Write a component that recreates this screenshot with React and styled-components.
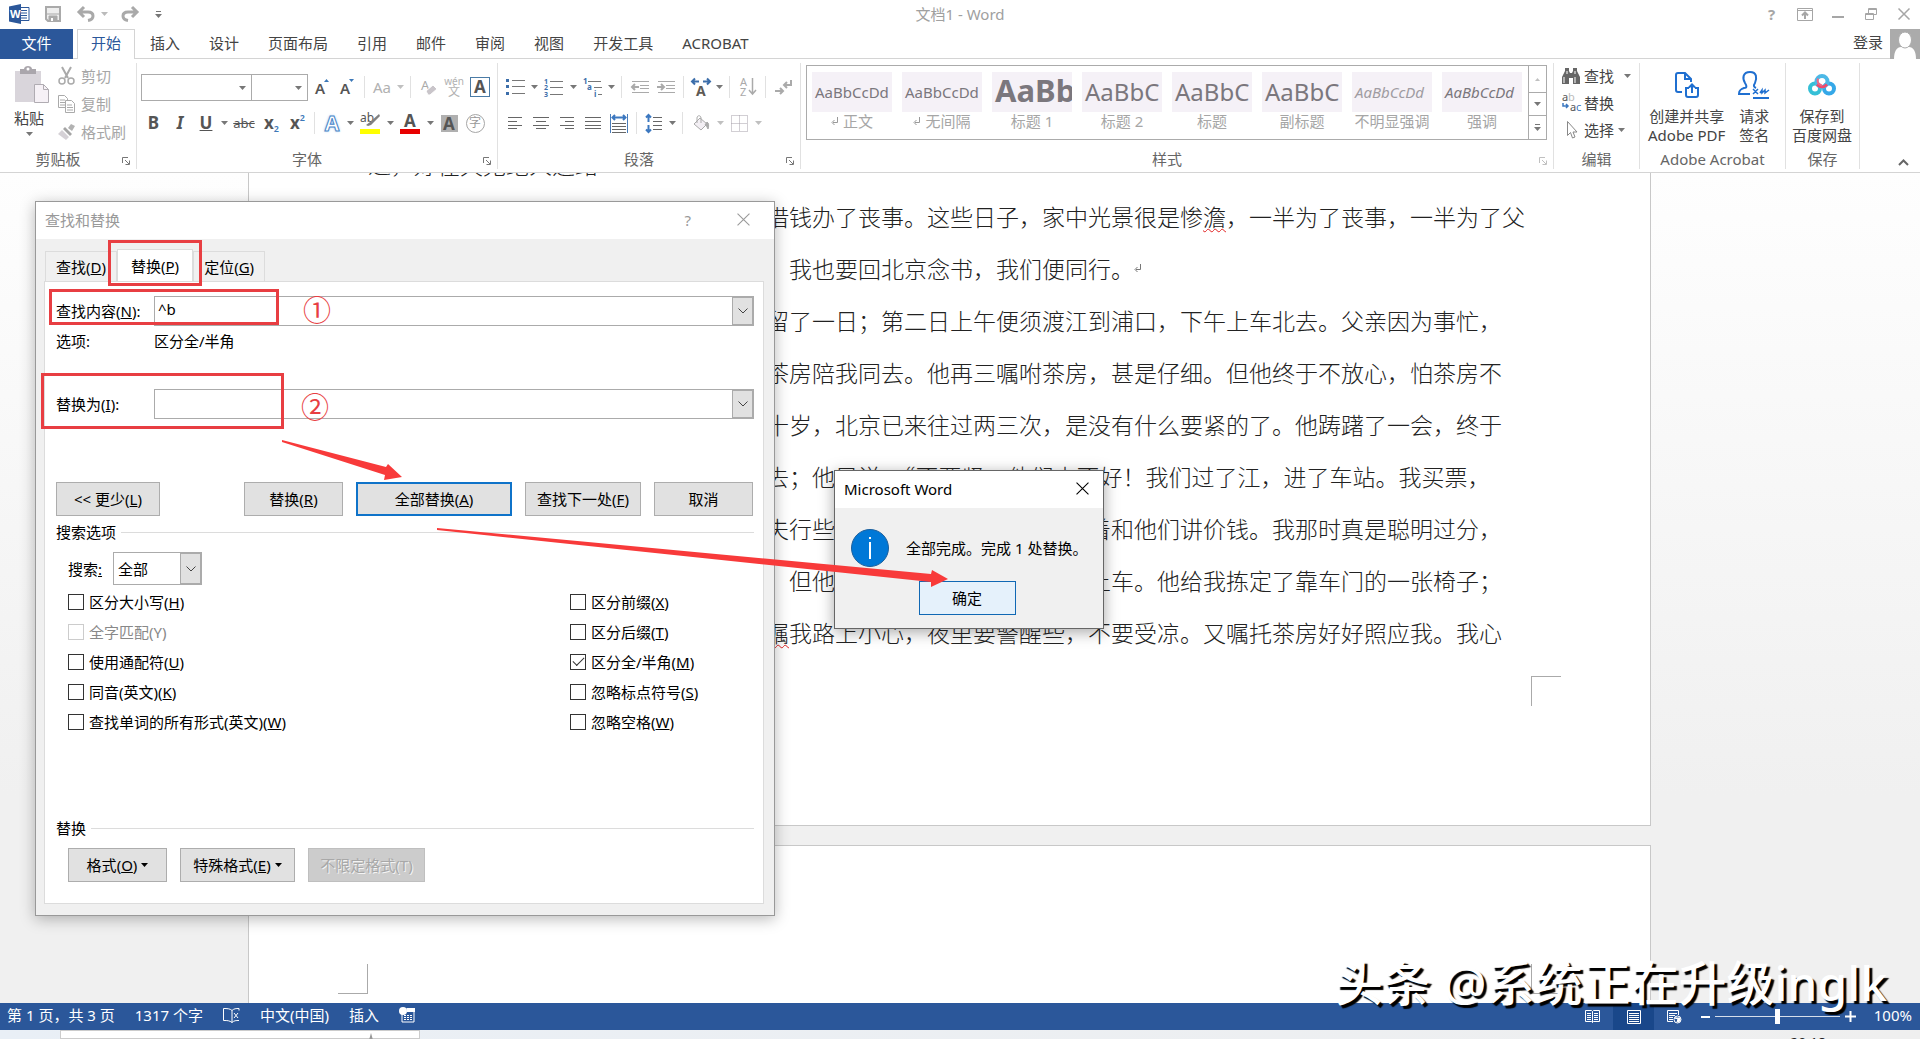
import React from 'react';
import styled, { createGlobalStyle, css } from 'styled-components';

const UI_FONT = '"Noto Sans", "Noto Sans CJK SC", sans-serif';
const CJK_FONT = '"Noto Sans CJK SC", sans-serif';

const GlobalStyle = createGlobalStyle`
    * {
        box-sizing: border-box;
    }

    body {
        margin: 0;
        overflow: hidden;
        font-family: ${UI_FONT};
        font-size: 15px;
        line-height: 20px;
        color: #444;
    }

    button, input, select {
        margin: 0;
        padding: 0;
        border: 0;
        border-radius: 0;
        background: none;
        color: inherit;
        font: inherit;
    }

    svg {
        display: block;
        flex: none;
        overflow: visible;
    }
`;

const Window = styled.div`
    position: relative;
    display: flex;
    flex-direction: column;
    height: 100vh;
    background: #fff;
    overflow: hidden;
`;

/* ---------- title bar ---------- */

const TitleBar = styled.header`
    display: grid;
    grid-template-columns: 1fr auto 1fr;
    align-items: center;
    height: 29px;
    flex: none;
    padding-bottom: 3px;
`;

const QuickAccess = styled.div`
    display: flex;
    align-items: center;
    padding-left: 9px;
`;

const WindowTitle = styled.div`
    color: #a0a0a0;
`;

const WindowButtons = styled.div`
    display: flex;
    justify-content: flex-end;
`;

const WindowButton = styled.button`
    display: flex;
    align-items: center;
    justify-content: center;
    width: 33px;
    height: 26px;
    color: #a6a6a6;
    font-weight: 700;
`;

/* ---------- tabs ---------- */

const TabBar = styled.nav`
    display: flex;
    gap: 1px;
    height: 30px;
    flex: none;
    border-bottom: 1px solid #d4d4d4;
`;

const FileTab = styled.button`
    width: 73px;
    height: 30px;
    margin-right: 3px;
    padding-bottom: 3px;
    background: #2b579a;
    color: #fff;
`;

const Tab = styled.button`
    height: 30px;
    padding: 0 13px 4px;
    border: 1px solid transparent;
    border-bottom: 0;

    ${({ $active }) => $active && css`
        background: #fff;
        border-color: #d4d4d4;
        color: #2b579a;
    `}
`;

const Account = styled.div`
    display: flex;
    align-items: flex-start;
    gap: 7px;
    margin-left: auto;

    a {
        padding-top: 3px;
        color: inherit;
        text-decoration: none;
    }
`;

/* ---------- ribbon ---------- */

const Ribbon = styled.section`
    display: flex;
    height: 114px;
    flex: none;
    padding-top: 4px;
    border-bottom: 1px solid #d4d4d4;
`;

const Group = styled.div`
    display: flex;
    flex-direction: column;
    height: 106px;
    width: ${({ $w }) => ($w ? `${$w}px` : 'auto')};
    flex: ${({ $w }) => ($w ? 'none' : '1 1 0')};
    min-width: 0;
    border-right: 1px solid #e1e1e1;
`;

const GroupBody = styled.div`
    display: flex;
    flex: 1;
    min-height: 0;
`;

const GroupFooter = styled.div`
    display: flex;
    align-items: center;
    height: 20px;
    color: #666;
`;

const GroupLabel = styled.span`
    flex: 1;
    text-align: center;
`;

const Launcher = styled.button`
    display: flex;
    justify-content: center;
    width: 20px;
    padding: 4px 0 0;
    color: ${({ disabled }) => (disabled ? '#c0c0c0' : '#777')};
`;

const Stack = styled.div`
    display: flex;
    flex-direction: column;
    gap: 8px;
    padding: 10px 0 0 4px;
`;

const Row = styled.div`
    display: flex;
    align-items: center;
    height: 28px;
`;

const Tool = styled.button`
    display: flex;
    align-items: center;
    justify-content: center;
    width: ${({ $w }) => $w || 26}px;
    height: 28px;
    color: ${({ $off }) => ($off ? '#b1b1b1' : '#555')};
    font-weight: ${({ $bold }) => ($bold ? 700 : 400)};
    font-size: ${({ $size }) => $size || 15}px;
`;

const Separator = styled.span`
    width: 1px;
    height: 22px;
    margin: 0 5px 0 4px;
    background: #e1e1e1;
`;

const ComboBox = styled.label`
    position: relative;
    display: flex;
    width: ${({ $w }) => $w}px;
    height: 27px;
    margin-right: ${({ $joined }) => ($joined ? '-1px' : '2px')};
    border: 1px solid #ababab;

    select {
        width: 100%;
        appearance: none;
    }

    svg {
        position: absolute;
        top: 11px;
        right: 5px;
        pointer-events: none;
    }
`;

const PasteButton = styled.button`
    display: flex;
    flex-direction: column;
    align-items: center;
    gap: 4px;
    width: 58px;
    padding-top: 3px;
`;

const SideList = styled.div`
    display: flex;
    flex-direction: column;
    gap: 8px;
    padding: ${({ $tight }) => ($tight ? '3px 0 0 8px' : '3px 0 0')};
`;

const SideButton = styled.button`
    display: flex;
    align-items: center;
    gap: ${({ $tight }) => ($tight ? 4 : 6)}px;
    height: ${({ $tight }) => ($tight ? 19 : 20)}px;
    color: ${({ disabled }) => (disabled ? '#a6a6a6' : '#444')};
`;

const UnderA = styled.span`
    display: flex;
    flex-direction: column;
    align-items: center;
    width: 20px;
    font-size: 17px;
    font-weight: 700;
    line-height: 16px;
    border-bottom: 5px solid ${({ $bar }) => $bar};
`;

const OutlineA = styled.span`
    color: #fff;
    font-size: 21px;
    font-weight: 700;
    -webkit-text-stroke: 1px #4a86c8;
    text-shadow: 0 0 3px #8ab8ea;
`;

const BoxedA = styled.span`
    width: ${({ $filled }) => ($filled ? 17 : 20)}px;
    height: ${({ $filled }) => ($filled ? 17 : 20)}px;
    background: ${({ $filled }) => ($filled ? '#b0b0b0' : '#fff')};
    border: ${({ $filled }) => ($filled ? '0' : '1px solid #4a7ba6')};
    font-size: 17px;
    font-weight: 700;
    line-height: 17px;
`;

const CircledChar = styled.span`
    width: 19px;
    height: 19px;
    border: 1px solid #a6a6a6;
    border-radius: 50%;
    color: #999;
    font-size: 12px;
    line-height: 16px;
`;

const Phonetic = styled.span`
    display: flex;
    flex-direction: column;
    align-items: center;
    font-size: 10px;
    line-height: 9px;

    b {
        font-size: 12px;
        font-weight: 400;
        line-height: 12px;
    }
`;

const Script = styled.span`
    display: flex;
    align-items: ${({ $sup }) => ($sup ? 'flex-start' : 'flex-end')};
    height: 20px;
    font-size: 17px;
    font-weight: 700;

    small {
        color: #3c78b8;
        font-size: 9px;
        font-weight: 600;
        line-height: ${({ $sup }) => ($sup ? 10 : 8)}px;
    }
`;

/* ---------- style gallery ---------- */

const Gallery = styled.div`
    display: flex;
    flex: 1;
    height: 75px;
    min-width: 0;
    margin: 2px 6px 0 5px;
    border: 1px solid #ababab;
`;

const GalleryItems = styled.div`
    display: flex;
    flex: 1;
    gap: 10px;
    min-width: 0;
    padding: 6px 0 0 5px;
    overflow: hidden;
`;

const StyleItem = styled.button`
    display: flex;
    flex-direction: column;
    align-items: center;
    width: 80px;
    flex: none;
    color: #a6a6a6;
    white-space: nowrap;
`;

const Sample = styled.span`
    width: 80px;
    height: 40px;
    padding-left: 3px;
    background: #f5f1f7;
    color: ${({ $light }) => ($light ? '#a09ca2' : '#7b777d')};
    font-size: ${({ $size }) => $size || 15}px;
    font-weight: ${({ $bold }) => ($bold ? 700 : 400)};
    font-style: ${({ $italic }) => ($italic ? 'italic' : 'normal')};
    line-height: ${({ $bold }) => ($bold ? 36 : 40)}px;
    text-align: left;
    overflow: hidden;
`;

const StyleName = styled.span`
    display: flex;
    align-items: center;
    gap: 4px;
    line-height: 18px;
`;

const GalleryScroll = styled.div`
    display: grid;
    grid-template-rows: 26px 23px 24px;
    width: 18px;
    border-left: 1px solid #ababab;
`;

const ScrollStep = styled.button`
    display: flex;
    align-items: center;
    justify-content: center;

    & + & {
        border-top: 1px solid #ababab;
    }
`;

const BigButtons = styled.div`
    display: flex;
    gap: 13px;
    padding-left: ${({ $indent }) => $indent}px;
`;

const BigButton = styled.button`
    display: flex;
    flex-direction: column;
    align-items: center;
    height: 84px;
    padding-top: 8px;
    line-height: 19px;

    svg {
        height: 28px;
        margin-bottom: 8px;
    }
`;

const CollapseCell = styled.div`
    display: flex;
    flex: none;
    align-items: flex-end;
    justify-content: flex-end;
    width: 60px;
    padding: 0 11px 6px 0;
`;

/* ---------- document ---------- */

const Workspace = styled.main`
    flex: 1;
    min-height: 0;
    padding: 0 269px 0 248px;
    background: linear-gradient(#fefefe, #f0f0f0 75%);
    overflow: hidden;
`;

const Page = styled.article`
    display: flex;
    flex-direction: column;
    margin-bottom: 19px;
    background: #fff;
    border: 1px solid #c8c8c8;
    border-top: ${({ $cont }) => ($cont ? '0' : '1px solid #c8c8c8')};
    overflow: hidden;
`;

const PageText = styled.div`
    margin-top: -35px;
    color: #222;
    font-family: ${CJK_FONT};
    font-size: 23px;
    font-weight: 300;
    line-height: 52px;
    white-space: pre;
`;

const Line = styled.div`
    display: flex;
    align-items: center;
    height: 52px;
    padding-left: ${({ $start }) => ($start ? 119 : 517)}px;
`;

const Misspelt = styled.span`
    text-decoration: underline wavy #e02020 1px;
    text-decoration-skip-ink: none;
    text-underline-offset: 2px;
`;

const Corners = styled.div`
    display: flex;
    justify-content: space-between;
    padding: ${({ $top }) => ($top ? '118px 89px 400px' : '18px 89px 119px')};
`;

const Corner = styled.span`
    width: 30px;
    height: 30px;
    border: 0 solid #aaa;
    border-width: ${({ $edges }) => $edges};
`;

/* ---------- status bar ---------- */

const StatusBar = styled.footer`
    display: flex;
    align-items: center;
    height: 27px;
    flex: none;
    padding: 0 8px 0 7px;
    background: #2b579a;
    color: #fff;
`;

const StatusInfo = styled.div`
    display: flex;
    align-items: center;
    gap: 20px;
    padding-bottom: 3px;
`;

const ViewTools = styled.div`
    display: flex;
    align-items: center;
    margin-left: auto;
`;

const ViewButton = styled.button`
    display: flex;
    align-items: center;
    justify-content: center;
    width: 41px;
    height: 27px;
    background: ${({ $active }) => ($active ? '#19478a' : 'none')};
`;

const ZoomStep = styled.button`
    display: flex;
    align-items: center;
    justify-content: center;
    width: 20px;
`;

const ZoomSlider = styled.input`
    width: 125px;
    height: 14px;
    appearance: none;

    &::-webkit-slider-runnable-track {
        height: 1px;
        background: #d5deeb;
    }

    &::-webkit-slider-thumb {
        appearance: none;
        width: 5px;
        height: 15px;
        margin-top: -7px;
        background: #fff;
    }
`;

const ZoomValue = styled.span`
    width: 52px;
    padding-bottom: 3px;
    text-align: right;
`;

const TaskStrip = styled.div`
    display: flex;
    justify-content: space-between;
    height: 9px;
    flex: none;
    padding: 0 94px 0 60px;
    background: linear-gradient(90deg, #e9eff6, #efefef);
    color: #222;
    overflow: hidden;
`;

const TaskSearch = styled.div`
    display: flex;
    width: 360px;
    padding: 2px 0 0 308px;
    background: #fff;
    border: 1px solid #ccc;
`;

const Clock = styled.span`
    padding-top: 3px;
    font-size: 14px;
`;

/* ---------- dialogs ---------- */

const Dialog = styled.section`
    position: absolute;
    top: ${({ $y }) => $y}px;
    left: ${({ $x }) => $x}px;
    width: ${({ $w }) => $w}px;
    display: flex;
    flex-direction: column;
    background: #f0f0f0;
    border: 1px solid ${({ $active }) => ($active ? '#666' : '#999')};
    box-shadow: 0 3px 14px rgba(0, 0, 0, ${({ $active }) => ($active ? 0.35 : 0.28)});
    color: #000;
`;

const DialogTitle = styled.div`
    display: flex;
    align-items: center;
    height: 37px;
    padding: 0 ${({ $active }) => ($active ? 14 : 24)}px 2px 9px;
    background: #fff;
    color: ${({ $active }) => ($active ? '#000' : '#999')};
`;

const DialogButtons = styled.div`
    display: flex;
    align-items: center;
    gap: 46px;
    margin-left: auto;
`;

const DialogTabs = styled.div`
    display: flex;
    align-items: flex-end;
    height: 42px;
    padding-left: 9px;
`;

const DialogTab = styled.button`
    height: ${({ $active }) => ($active ? 33 : 30)}px;
    margin-bottom: ${({ $active }) => ($active ? '-1px' : '0')};
    padding: 0 ${({ $active }) => ($active ? 13 : 10)}px;
    background: ${({ $active }) => ($active ? '#fff' : '#f0f0f0')};
    border: 1px solid #dcdcdc;
    border-bottom: 0;
`;

const Pane = styled.div`
    display: flex;
    flex-direction: column;
    margin: 0 10px 11px 8px;
    padding: 14px 9px 21px 11px;
    background: #fff;
    border: 1px solid #dcdcdc;
`;

const Field = styled.div`
    display: grid;
    grid-template-columns: 98px 1fr;
    align-items: center;
    min-height: 30px;
    margin-bottom: ${({ $gap }) => $gap || 0}px;
`;

const EditCombo = styled.div`
    display: flex;
    height: 30px;
    border: 1px solid #ababab;

    input {
        flex: 1;
        padding: 0 3px 4px;
        outline: none;
    }
`;

const DropButton = styled.button`
    display: flex;
    align-items: center;
    justify-content: center;
    width: 21px;
    background: #e1e1e1;
    border: 1px solid #ababab;
`;

const Actions = styled.div`
    display: flex;
    gap: 13px;
    padding-left: ${({ $indent }) => $indent || 0}px;
`;

const PushButton = styled.button`
    display: flex;
    align-items: center;
    justify-content: center;
    gap: 4px;
    width: ${({ $w }) => $w}px;
    height: 34px;
    background: #e1e1e1;
    border: 1px solid #adadad;

    ${({ $primary }) => $primary && css`
        border: 2px solid #0f73c9;
    `}

    ${({ $hot }) => $hot && css`
        background: #e5f1fb;
        border-color: #1068b4;
    `}

    &:disabled {
        background: #ccc;
        border-color: #bfbfbf;
        color: #a8a8a8;
        text-shadow: 1px 1px 0 #f4f4f4;
    }
`;

const Spacer = styled.span`
    width: 58px;
`;

const Legend = styled.h2`
    display: flex;
    align-items: center;
    gap: 5px;
    margin: 6px 0 10px;
    font-size: 15px;
    font-weight: 400;

    &::after {
        content: '';
        flex: 1;
        height: 1px;
        background: #dcdcdc;
    }
`;

const SearchRow = styled.div`
    display: flex;
    align-items: center;
    gap: 11px;
    padding-left: 12px;
    margin-bottom: 2px;
`;

const SelectBox = styled.div`
    position: relative;
    display: flex;
    width: 89px;
    height: 33px;
    border: 1px solid #ababab;

    select {
        width: 100%;
        padding-left: 4px;
        appearance: none;
    }

    ${DropButton} {
        position: absolute;
        top: 0;
        right: 0;
        height: 31px;
        pointer-events: none;
    }
`;

const Options = styled.div`
    display: grid;
    grid-template-columns: 502px 1fr;
    padding: 0 0 75px 12px;
`;

const Option = styled.label`
    display: flex;
    align-items: center;
    gap: 5px;
    height: 30px;
    color: ${({ $off }) => ($off ? '#888' : '#000')};

    input {
        display: flex;
        align-items: center;
        justify-content: center;
        width: 16px;
        height: 16px;
        border: 1px solid ${({ $off }) => ($off ? '#ccc' : '#333')};
        appearance: none;
    }

    input:checked::after {
        content: '';
        width: 10px;
        height: 5px;
        margin-bottom: 4px;
        border: solid #333;
        border-width: 0 0 1px 1px;
        transform: rotate(-45deg);
    }
`;

const Message = styled.div`
    display: flex;
    align-items: center;
    gap: 17px;
    padding: 21px 0 0 16px;
`;

const MessageFooter = styled.div`
    display: flex;
    justify-content: center;
    padding: 14px 4px 13px 0;
`;

/* ---------- annotations ---------- */

const Mark = styled.div`
    position: absolute;
    left: ${({ $x }) => $x}px;
    top: ${({ $y }) => $y}px;
    width: ${({ $w }) => $w}px;
    height: ${({ $h }) => $h}px;
    border: 3px solid #e83e42;
    pointer-events: none;
`;

const StepNumber = styled.span`
    position: absolute;
    left: ${({ $x }) => $x}px;
    top: ${({ $y }) => $y}px;
    color: #e83e42;
    font-family: ${CJK_FONT};
    font-size: 28px;
    line-height: 28px;
`;

const Arrows = styled.svg`
    position: absolute;
    left: 0;
    top: 0;
    pointer-events: none;
`;

const Watermark = styled.div`
    position: absolute;
    right: 33px;
    bottom: 26px;
    color: #fff;
    font-size: 48px;
    font-weight: 500;
    line-height: 60px;
    white-space: nowrap;
    text-shadow: 3px 3px 1px #000;
`;

/* ---------- icons ---------- */

const Caret = ({ color = '#777' }) => (
    <svg width="7" height="4" viewBox="0 0 7 4"><path d="M0 0h7L3.500 4z" fill={color} /></svg>
);

const DropTool = ({ off }) => (
    <Tool $w={12} aria-label="更多"><Caret color={off ? '#c0c0c0' : '#777'} /></Tool>
);

const Chevron = () => (
    <svg width="10" height="6" viewBox="0 0 10 6" fill="none" stroke="#444"><path d="M.5.5 5 5 9.500.5" /></svg>
);

const Cross = ({ size = 12, color = '#999', weight = 1 }) => (
    <svg width={size} height={size} viewBox="0 0 12 12" stroke={color} strokeWidth={weight}>
        <path d="M.5.5l11 11M11.500.5l-11 11" />
    </svg>
);

const ReturnMark = ({ color = '#999' }) => (
    <svg width="8" height="9" viewBox="0 0 8 9" fill="none" stroke={color}>
        <path d="M6.500 0v5.500H2M3.500 3 1 5.500 3.500 8" />
    </svg>
);

const WordIcon = () => (
    <svg width="21" height="20" viewBox="0 0 21 20">
        <path d="M11 3.500h9v13h-9" fill="#fff" stroke="#2b579a" />
        <path d="M12 6.500h6M12 9h6M12 11.500h6M12 14h6" stroke="#2b579a" />
        <path d="M0 2.500 12 0v20L0 17.500z" fill="#2b579a" />
        <text x="1" y="14" fill="#fff" fontSize="11" fontWeight="700">W</text>
    </svg>
);

const SaveIcon = () => (
    <svg width="16" height="16" viewBox="0 0 16 16">
        <path d="M1 1h14v14H3l-2-2z" fill="#eee" stroke="#aaa" strokeWidth="2" />
        <path d="M4 10h8v5H4zM2 8h12" fill="#aaa" stroke="#aaa" />
        <path d="M6 12h2v3H6z" fill="#fff" />
    </svg>
);

const UndoIcon = ({ flip }) => (
    <svg width="18" height="16" viewBox="0 0 18 16" fill="none" stroke="#a9a9a9" strokeWidth="3">
        <g transform={flip ? 'translate(18 0) scale(-1 1)' : undefined}>
            <path d="M2 6h9c3 0 5 1.500 5 4s-2 4-5 4.500M7 1 2 6l5 5" />
        </g>
    </svg>
);

const CustomizeIcon = () => (
    <svg width="7" height="7" viewBox="0 0 7 7"><path d="M1 .5h5" stroke="#777" /><path d="M0 3h7L3.500 7z" fill="#777" /></svg>
);

const RibbonOptionsIcon = () => (
    <svg width="16" height="13" viewBox="0 0 16 13" fill="none" stroke="#a6a6a6">
        <path d="M.5.5h15v12H.5zM.5 2.500h15" />
        <path d="M8 11V5M5 7.500 8 4.500l3 3" strokeWidth="2" />
    </svg>
);

const RestoreIcon = () => (
    <svg width="12" height="12" viewBox="0 0 12 12" fill="none" stroke="#a6a6a6">
        <path d="M.5 5.500h8v6h-8zM.5 6.500h8M3.500 5V.5h8v6H9M3.500 1.500h8" />
    </svg>
);

const AvatarIcon = () => (
    <svg width="30" height="30" viewBox="0 0 30 30">
        <path d="M0 0h30v30H0z" fill="#ababab" />
        <path d="M4 30c0-8 3-12 7-12h8c4 0 7 4 7 12z" fill="#fff" />
        <ellipse cx="15" cy="11" rx="6.500" ry="8" fill="#fff" stroke="#ababab" />
    </svg>
);

const LaunchIcon = () => (
    <svg width="8" height="8" viewBox="0 0 8 8" fill="none" stroke="currentColor">
        <path d="M.5 6V.5H6M3 3l4 4M7.500 3.500v4h-4" />
    </svg>
);

const PasteIcon = () => (
    <svg width="42" height="38" viewBox="-6 0 42 38">
        <path d="M1 5h26v31H1z" fill="#d9d5db" />
        <path d="M6 8V3h4c0-4 8-4 8 0h4v5z" fill="#aaa6ac" />
        <circle cx="14" cy="3" r="1.500" fill="#fff" />
        <path d="M20.500 18.500h9l5 5v13h-14z" fill="#f6f1f6" stroke="#b0acb2" />
        <path d="M29.500 18.500v5h5" fill="none" stroke="#b0acb2" />
    </svg>
);

const CutIcon = () => (
    <svg width="17" height="18" viewBox="0 0 17 18" fill="none" stroke="#aaa" strokeWidth="2">
        <path d="M4 0l6 11M13 0 7 11" />
        <circle cx="4" cy="14" r="3" strokeWidth="1.500" />
        <circle cx="13" cy="14" r="3" strokeWidth="1.500" />
    </svg>
);

const CopyIcon = () => (
    <svg width="17" height="18" viewBox="0 0 17 18" fill="#fff" stroke="#aaa">
        <path d="M.5.5h6l3 3v9h-9zM2 5h5M2 7.500h5M2 10h5" />
        <path d="M7.500 5.500h6l3 3v9h-9zM9 10h5M9 12.500h6M9 15h6" />
    </svg>
);

const BrushIcon = () => (
    <svg width="17" height="16" viewBox="0 0 17 16">
        <path d="M10 4 13 0l4 2-3 5z" fill="#b2b2b2" />
        <path d="M7 3l7 7-2 2-7-7z" fill="#a5a5a5" />
        <path d="M4 6l7 7-3 3-8-6z" fill="#d5d1d6" />
    </svg>
);

const GrowFont = ({ down }) => (
    <svg width="15" height="20" viewBox="0 0 15 20">
        <text x="0" y="17" fontSize="15" fontWeight="600" fill="#555">A</text>
        <path d={down ? 'M9 2h5l-2.500 3z' : 'M9 5h5l-2.500-3z'} fill="#3c78b8" />
    </svg>
);

const ClearFormat = () => (
    <svg width="16" height="18" viewBox="0 0 16 18">
        <text x="0" y="12" fontSize="13" fill="#aaa">A</text>
        <path d="M5 13l7-6 4 4-7 6H7z" fill="#c9c5ca" stroke="#fff" />
    </svg>
);

const Highlighter = () => (
    <svg width="20" height="22" viewBox="0 0 20 22">
        <text x="0" y="10" fontSize="12" fill="#555">ab</text>
        <path d="M19 2l1 2-9 9-3 1-2-1 4-3z" fill="#808080" />
        <path d="M0 17h20v5H0z" fill="#ffff00" />
    </svg>
);

const BulletsIcon = () => (
    <svg width="19" height="18" viewBox="0 0 19 18">
        <path d="M0 1h3v3H0zM0 7h3v3H0zM0 14h3v3H0z" fill="#3c6eaa" />
        <path d="M6 2.500h13M6 8.500h13M6 15.500h13" stroke="#777" />
    </svg>
);

const NumberingIcon = () => (
    <svg width="19" height="19" viewBox="0 0 19 19">
        <g fontSize="7" fontWeight="700" fill="#3c6eaa">
            <text x="0" y="6">1</text>
            <text x="0" y="12">2</text>
            <text x="0" y="19">3</text>
        </g>
        <path d="M6 3.500h13M6 9.500h13M6 16.500h13" stroke="#777" />
    </svg>
);

const MultilevelIcon = () => (
    <svg width="19" height="19" viewBox="0 0 19 19">
        <g fontSize="8" fontWeight="700" fill="#3c6eaa">
            <text x="0" y="6">1</text>
            <text x="4" y="12">a</text>
            <text x="11" y="19">i</text>
        </g>
        <path d="M5 3.500h13M11 9.500h8M15 16.500h4" stroke="#777" />
    </svg>
);

const IndentIcon = ({ out }) => (
    <svg width="18" height="12" viewBox="0 0 18 12" fill="none" stroke="#aaa">
        <path d="M1 .5h17M9 4.500h9M9 7.500h9M1 11.500h17" />
        <path d={out ? 'M8 6H1M4 3 1 6l3 3' : 'M0 6h7M4 3l3 3-3 3'} strokeWidth="2" />
    </svg>
);

const AsianLayout = () => (
    <svg width="20" height="18" viewBox="0 0 20 18">
        <text x="5" y="18" fontSize="14" fontWeight="700" fill="#5e5a55">A</text>
        <path d="M8 3.500H1M4 .5l-3 3 3 3M12 3.500h7M16 .5l3 3-3 3" fill="none" stroke="#3c6eaa" strokeWidth="2" />
    </svg>
);

const SortIcon = () => (
    <svg width="17" height="20" viewBox="0 0 17 20">
        <g fontSize="11" fill="#aaa">
            <text x="0" y="9">A</text>
            <text x="0" y="19">Z</text>
        </g>
        <path d="M12.500 1v16M9 13l3.500 4 3.500-4" fill="none" stroke="#aaa" strokeWidth="1.500" />
    </svg>
);

const MarksIcon = () => (
    <svg width="17" height="15" viewBox="0 0 17 15" fill="none" stroke="#aaa" strokeWidth="2">
        <path d="M16 0v5h-6M12 2 9 5l3 3M0 11h8M5 8l3 3-3 3" />
    </svg>
);

const ALIGN_LINES = {
    left: 'M0 .5h14M0 4.500h9M0 8.500h14M0 11.500h9',
    center: 'M0 .5h16M3 4.500h10M0 8.500h16M3 11.500h10',
    right: 'M0 .5h14M5 4.500h9M0 8.500h14M5 11.500h9',
    justify: 'M0 .5h16M0 4.500h16M0 8.500h16M0 11.500h16',
};

const AlignIcon = ({ kind }) => (
    <svg width={kind === 'left' || kind === 'right' ? 14 : 16} height="12" stroke="#666">
        <path d={ALIGN_LINES[kind]} />
    </svg>
);

const DistributeIcon = () => (
    <svg width="18" height="19" viewBox="0 0 18 19" fill="none">
        <path d="M.5 0v19M17.500 0v19" stroke="#4a7dba" />
        <path d="M2 3.500h14M5 1 2.500 3.500 5 6M13 1l2.500 2.500L13 6" stroke="#3c78c0" strokeWidth="2" />
        <path d="M2 9.500h14M2 12.500h14M2 15.500h14M2 18.500h14" stroke="#666" />
    </svg>
);

const SpacingIcon = () => (
    <svg width="18" height="19" viewBox="0 0 18 19" fill="none">
        <path d="M3.500 8V1M1 3.500 3.500 1 6 3.500M3.500 11v7M1 15.500 3.500 18 6 15.500" stroke="#3c78c0" strokeWidth="2" />
        <path d="M8 3.500h9M8 7.500h9M8 11.500h9M8 15.500h9" stroke="#666" />
    </svg>
);

const BucketIcon = () => (
    <svg width="17" height="17" viewBox="0 0 17 17" fill="#f3eff4" stroke="#aaa">
        <path d="M7 3l7 6-6 6-7-6z" />
        <path d="M4 8V3c0-3 4-3 4 0v5" fill="none" />
        <path d="M14 7c2 1 2 4 1 7-1-2-2-4-3-4z" fill="#aaa" />
    </svg>
);

const BordersIcon = () => (
    <svg width="17" height="17" viewBox="0 0 17 17" fill="none" stroke="#a59fa8" strokeDasharray="1 1">
        <path d="M.5.5h16v16H.5zM.5 8.500h16M8.500.5v16" />
    </svg>
);

const FindIcon = () => (
    <svg width="18" height="16" viewBox="0 0 18 16">
        <path d="M3 0h4v3l1 2h2l1-2V0h4v3l3 6v7h-7v-6H7v6H0V9l3-6z" fill="#666" />
        <path d="M2 9v6M13 9v6M5 3v3M13 3v3" stroke="#fff" />
    </svg>
);

const ReplaceIcon = () => (
    <svg width="18" height="19" viewBox="0 0 18 19">
        <text x="0" y="8" fontSize="11" fill="#555">a</text>
        <text x="6" y="8" fontSize="11" fill="#bbb">b</text>
        <text x="8" y="18" fontSize="11" fill="#555">a</text>
        <text x="14" y="18" fontSize="11" fill="#3c78c0">c</text>
        <path d="M1 10v3h5M4 11l2 2-2 2" fill="none" stroke="#3c78c0" strokeWidth="1.500" />
    </svg>
);

const CursorIcon = () => (
    <svg width="18" height="18" viewBox="0 0 18 18">
        <path d="M5.500.5v14l3-3 2 5.500 2.500-1-2-5h4z" fill="#fff" stroke="#888" />
    </svg>
);

const PdfIcon = () => (
    <svg width="24" height="26" viewBox="0 0 24 26" fill="none" stroke="#1f6fd0" strokeWidth="2">
        <path d="M7 20H3c-1 0-2-1-2-2V3c0-1 1-2 2-2h7l6 6v3M10 1v6h6" />
        <path d="M14 16h-3v7c0 1 1 2 2 2h8c1 0 2-1 2-2v-7h-3M17 21v-8M14 15.500l3-3 3 3" />
    </svg>
);

const SignIcon = () => (
    <svg width="32" height="28" viewBox="0 0 32 28" fill="none" stroke="#1f6fd0" strokeWidth="2">
        <path d="M12 23H1c0-4 2-5 5-6 3 0 3-2 1-5-3-5-2-11 5-11s7 6 5 11c-2 3-1 4 1 5" />
        <path d="M15 27h16" />
        <path d="M15 18l5 5M20 18l-5 5M22 22l2-3v3l3-3v3l4-3" strokeWidth="1.500" />
    </svg>
);

const NetdiskIcon = () => (
    <svg width="28" height="23" viewBox="0 0 28 23" fill="none" strokeWidth="4">
        <circle cx="7" cy="15" r="5" stroke="#35bfd6" />
        <circle cx="21" cy="15" r="5" stroke="#35a8e8" />
        <circle cx="14" cy="8" r="5.500" stroke="#4cb8e6" />
        <path d="M9 11c3 3 7 3 10 0" stroke="#ef4a6c" strokeWidth="3" />
        <path d="M10 5c-1 3 0 6 4 7" stroke="#ef6a86" strokeWidth="2" />
    </svg>
);

const ProofIcon = () => (
    <svg width="17" height="15" viewBox="0 0 17 15" fill="none" stroke="#fff">
        <path d="M9 2.500C7 .5 4 .5.500.5v12c4 0 6 0 8.500 2V2.500M9 2.500C11 .5 13 .5 16 .5v2M9 14.500c2-2 4-2 7-2M11 5l4 5M15 5l-4 5" />
    </svg>
);

const MacroIcon = () => (
    <svg width="16" height="16" viewBox="0 0 16 16">
        <path d="M3 2h12v13H3z" fill="none" stroke="#fff" />
        <path d="M8 1h8v4H8z" fill="#fff" />
        <circle cx="4" cy="4" r="4" fill="#fff" />
        <path d="M5 8.500h2m1 0h2m1 0h2M5 10.500h2m1 0h2m1 0h2M5 12.500h2m1 0h2m1 0h2" stroke="#fff" />
    </svg>
);

const ReadIcon = () => (
    <svg width="15" height="13" viewBox="0 0 15 13" fill="none" stroke="#fff">
        <path d="M7.500 1.500v11M.5.5h6l1 1 1-1h6v11h-6l-1 1-1-1h-6zM2 3.500h4M2 5.500h4M2 7.500h4M2 9.500h4M9 3.500h4M9 5.500h4M9 7.500h4M9 9.500h4" />
    </svg>
);

const PrintIcon = () => (
    <svg width="14" height="14" viewBox="0 0 14 14" fill="none" stroke="#fff">
        <path d="M.5.5h13v13H.5zM2 3.500h10M2 5.500h10M2 7.500h10M2 9.500h10M2 11.500h10" />
    </svg>
);

const WebIcon = () => (
    <svg width="15" height="14" viewBox="0 0 15 14" fill="none" stroke="#fff">
        <path d="M6 11.500H.5V.5h11V5M2 3.500h8M2 5.500h6M2 7.500h4M2 9.500h4" />
        <circle cx="10.500" cy="9.500" r="3.500" />
        <path d="M8 8l3 1-1 3 3-1V8z" fill="#fff" />
    </svg>
);

const InfoIcon = () => (
    <svg width="38" height="38" viewBox="0 0 38 38">
        <circle cx="19" cy="19" r="18.500" fill="#0078d7" stroke="#1c5f9c" />
        <path d="M19 13v17M19 8v2" stroke="#fff" strokeWidth="2" />
    </svg>
);

/* ---------- data ---------- */

const TABS = ['开始', '插入', '设计', '页面布局', '引用', '邮件', '审阅', '视图', '开发工具', 'ACROBAT'];

const STYLES = [
    { name: '正文', sample: 'AaBbCcDd', mark: true },
    { name: '无间隔', sample: 'AaBbCcDd', mark: true },
    { name: '标题 1', sample: 'AaBb', size: 31, bold: true },
    { name: '标题 2', sample: 'AaBbC', size: 24 },
    { name: '标题', sample: 'AaBbC', size: 24 },
    { name: '副标题', sample: 'AaBbC', size: 24 },
    { name: '不明显强调', sample: 'AaBbCcDd', italic: true, light: true },
    { name: '强调', sample: 'AaBbCcDd', italic: true },
];

const OPTIONS = [
    ['区分大小写', 'H'], ['区分前缀', 'X'],
    ['全字匹配', 'Y', { disabled: true }], ['区分后缀', 'T'],
    ['使用通配符', 'U'], ['区分全/半角', 'M', { defaultChecked: true }],
    ['同音(英文)', 'K'], ['忽略标点符号', 'S'],
    ['查找单词的所有形式(英文)', 'W'], ['忽略空格', 'W'],
];

/* ---------- parts ---------- */

const RibbonGroup = ({ label, width, launcher, disabled, children }) => (
    <Group $w={width}>
        <GroupBody>{children}</GroupBody>
        <GroupFooter>
            <GroupLabel>{label}</GroupLabel>
            {launcher && <Launcher disabled={disabled} aria-label={label}><LaunchIcon /></Launcher>}
        </GroupFooter>
    </Group>
);

const Key = ({ text, k }) => <span>{text}(<u>{k}</u>)</span>;

const FontGroup = () => (
    <RibbonGroup label="字体" width={361} launcher>
        <Stack>
            <Row>
                <ComboBox $w={111} $joined><select aria-label="字体"><option> </option></select><Caret /></ComboBox>
                <ComboBox $w={57}><select aria-label="字号"><option> </option></select><Caret /></ComboBox>
                <Tool $w={25}><GrowFont /></Tool>
                <Tool $w={25}><GrowFont down /></Tool>
                <Separator />
                <Tool $w={24} $off>Aa</Tool>
                <DropTool off />
                <Separator />
                <Tool><ClearFormat /></Tool>
                <Tool $w={24} $off><Phonetic>wén<b>文</b></Phonetic></Tool>
                <Tool $w={28}><BoxedA>A</BoxedA></Tool>
            </Row>
            <Row>
                <Tool $w={25} $bold $size={17}>B</Tool>
                <Tool $w={28} $bold $size={17}><i>I</i></Tool>
                <Tool $w={24} $bold $size={17}><u>U</u></Tool>
                <DropTool />
                <Tool $w={28} $size={13}><s>abc</s></Tool>
                <Tool $w={27}><Script>x<small>2</small></Script></Tool>
                <Tool $w={25}><Script $sup>x<small>2</small></Script></Tool>
                <Separator />
                <Tool $w={24}><OutlineA>A</OutlineA></Tool>
                <DropTool />
                <Tool $w={28}><Highlighter /></Tool>
                <DropTool />
                <Tool $w={28}><UnderA $bar="#e80000">A</UnderA></Tool>
                <DropTool />
                <Tool><BoxedA $filled>A</BoxedA></Tool>
                <Tool><CircledChar>字</CircledChar></Tool>
            </Row>
        </Stack>
    </RibbonGroup>
);

const ParagraphGroup = () => (
    <RibbonGroup label="段落" width={303} launcher>
        <Stack>
            <Row>
                <Tool><BulletsIcon /></Tool>
                <DropTool />
                <Tool $w={27}><NumberingIcon /></Tool>
                <DropTool />
                <Tool><MultilevelIcon /></Tool>
                <DropTool />
                <Separator />
                <Tool><IndentIcon out /></Tool>
                <Tool><IndentIcon /></Tool>
                <Separator />
                <Tool $w={24}><AsianLayout /></Tool>
                <DropTool />
                <Separator />
                <Tool><SortIcon /></Tool>
                <Separator />
                <Tool $w={24}><MarksIcon /></Tool>
            </Row>
            <Row>
                <Tool><AlignIcon kind="left" /></Tool>
                <Tool><AlignIcon kind="center" /></Tool>
                <Tool><AlignIcon kind="right" /></Tool>
                <Tool><AlignIcon kind="justify" /></Tool>
                <Tool><DistributeIcon /></Tool>
                <Separator />
                <Tool $w={24}><SpacingIcon /></Tool>
                <DropTool />
                <Separator />
                <Tool><BucketIcon /></Tool>
                <DropTool off />
                <Tool><BordersIcon /></Tool>
                <DropTool off />
            </Row>
        </Stack>
    </RibbonGroup>
);

const StylesGroup = () => (
    <RibbonGroup label="样式" launcher disabled>
        <Gallery>
            <GalleryItems>
                {STYLES.map((s) => (
                    <StyleItem key={s.name}>
                        <Sample $size={s.size} $bold={s.bold} $italic={s.italic} $light={s.light}>{s.sample}</Sample>
                        <StyleName>{s.mark && <ReturnMark />}{s.name}</StyleName>
                    </StyleItem>
                ))}
            </GalleryItems>
            <GalleryScroll>
                <ScrollStep aria-label="上"><svg width="5" height="3"><path d="M0 3h5L2.500 0z" fill="#c0c0c0" /></svg></ScrollStep>
                <ScrollStep aria-label="下"><Caret /></ScrollStep>
                <ScrollStep aria-label="更多"><CustomizeIcon /></ScrollStep>
            </GalleryScroll>
        </Gallery>
    </RibbonGroup>
);

const Document = () => (
    <Workspace>
        <Page $cont>
            <PageText>
                <Line $start>过，好在天无绝人之路</Line>
                <Line>借钱办了丧事。这些日子，家中光景很是惨<Misspelt>澹</Misspelt>，一半为了丧事，一半为了父</Line>
                <Line>，我也要回北京念书，我们便同行。<ReturnMark color="#777" /></Line>
                <Line>留了一日；第二日上午便须渡江到浦口，下午上车北去。父亲因为事忙，</Line>
                <Line>茶房陪我同去。他再三嘱咐茶房，甚是仔细。但他终于不放心，怕茶房不</Line>
                <Line>十岁，北京已来往过两三次，是没有什么要紧的了。他踌躇了一会，终于</Line>
                <Line>去；他只说：“不要紧，他们去不好！我们过了江，进了车站。我买票，</Line>
                <Line>夫行些小费才可过去。他便又忙着和他们讲价钱。我那时真是聪明过分，</Line>
                <Line>，但他终于讲定了价钱；就送我上车。他给我拣定了靠车门的一张椅子；</Line>
                <Line><Misspelt>嘱</Misspelt>我路上小心，夜里要警醒些，不要受凉。又嘱托茶房好好照应我。我心</Line>
            </PageText>
            <Corners>
                <Corner $edges="1px 1px 0 0" />
                <Corner $edges="1px 0 0 1px" />
            </Corners>
        </Page>
        <Page>
            <Corners $top>
                <Corner $edges="0 1px 1px 0" />
                <Corner $edges="0 0 1px 1px" />
            </Corners>
        </Page>
    </Workspace>
);

const FindReplaceDialog = () => (
    <Dialog $x={35} $y={201} $w={740} role="dialog" aria-label="查找和替换">
        <DialogTitle>
            查找和替换
            <DialogButtons>
                <button>?</button>
                <button aria-label="关闭"><Cross size={13} /></button>
            </DialogButtons>
        </DialogTitle>
        <DialogTabs>
            <DialogTab><Key text="查找" k="D" /></DialogTab>
            <DialogTab $active><Key text="替换" k="P" /></DialogTab>
            <DialogTab><Key text="定位" k="G" /></DialogTab>
        </DialogTabs>
        <Pane>
            <Field>
                <label htmlFor="find"><Key text="查找内容" k="N" />:</label>
                <EditCombo><input id="find" defaultValue="^b" /><DropButton aria-label="展开"><Chevron /></DropButton></EditCombo>
            </Field>
            <Field $gap={33}>
                <span>选项:</span>
                <span>区分全/半角</span>
            </Field>
            <Field $gap={63}>
                <label htmlFor="replace"><Key text="替换为" k="I" />:</label>
                <EditCombo><input id="replace" /><DropButton aria-label="展开"><Chevron /></DropButton></EditCombo>
            </Field>
            <Actions>
                <PushButton $w={104}><Key text="<< 更少" k="L" /></PushButton>
                <Spacer />
                <PushButton $w={99}><Key text="替换" k="R" /></PushButton>
                <PushButton $w={156} $primary><Key text="全部替换" k="A" /></PushButton>
                <PushButton $w={116}><Key text="查找下一处" k="F" /></PushButton>
                <PushButton $w={99}>取消</PushButton>
            </Actions>
            <Legend>搜索选项</Legend>
            <SearchRow>
                <label htmlFor="direction">搜索<u>:</u></label>
                <SelectBox>
                    <select id="direction"><option>全部</option></select>
                    <DropButton as="span"><Chevron /></DropButton>
                </SelectBox>
            </SearchRow>
            <Options>
                {OPTIONS.map(([text, k, props]) => (
                    <Option key={text} $off={props?.disabled}>
                        <input type="checkbox" {...props} />
                        {props?.disabled ? <span>{text}({k})</span> : <Key text={text} k={k} />}
                    </Option>
                ))}
            </Options>
            <Legend>替换</Legend>
            <Actions $indent={12}>
                <PushButton $w={99}><Key text="格式" k="O" /><Caret color="#000" /></PushButton>
                <PushButton $w={115}><Key text="特殊格式" k="E" /><Caret color="#000" /></PushButton>
                <PushButton $w={117} disabled>不限定格式(T)</PushButton>
            </Actions>
        </Pane>
    </Dialog>
);

const MessageDialog = () => (
    <Dialog $x={834} $y={470} $w={270} $active role="alertdialog" aria-label="Microsoft Word">
        <DialogTitle $active>
            Microsoft Word
            <DialogButtons><button aria-label="关闭"><Cross size={13} color="#000" /></button></DialogButtons>
        </DialogTitle>
        <Message>
            <InfoIcon />
            <span>全部完成。完成 1 处替换。</span>
        </Message>
        <MessageFooter><PushButton $w={97} $hot>确定</PushButton></MessageFooter>
    </Dialog>
);

const App = () => {
    return (
        <Window>
            <GlobalStyle />
            <TitleBar>
                <QuickAccess>
                    <WordIcon />
                    <Tool $w={46}><SaveIcon /></Tool>
                    <Tool $w={20}><UndoIcon /></Tool>
                    <Tool $w={16}><Caret color="#bbb" /></Tool>
                    <Tool $w={36}><UndoIcon flip /></Tool>
                    <Tool $w={20}><CustomizeIcon /></Tool>
                </QuickAccess>
                <WindowTitle>文档1 - Word</WindowTitle>
                <WindowButtons>
                    <WindowButton>?</WindowButton>
                    <WindowButton aria-label="功能区显示选项"><RibbonOptionsIcon /></WindowButton>
                    <WindowButton aria-label="最小化"><svg width="12" height="10"><path d="M0 7h12v2H0z" fill="#a6a6a6" /></svg></WindowButton>
                    <WindowButton aria-label="还原"><RestoreIcon /></WindowButton>
                    <WindowButton aria-label="关闭"><Cross color="#a6a6a6" weight={1.5} /></WindowButton>
                </WindowButtons>
            </TitleBar>
            <TabBar>
                <FileTab>文件</FileTab>
                {TABS.map((tab, i) => <Tab key={tab} $active={i === 0}>{tab}</Tab>)}
                <Account><a href="#login">登录</a><AvatarIcon /></Account>
            </TabBar>
            <Ribbon>
                <RibbonGroup label="剪贴板" width={137} launcher>
                    <PasteButton><PasteIcon /><span>粘贴</span><Caret /></PasteButton>
                    <SideList>
                        <SideButton disabled><CutIcon />剪切</SideButton>
                        <SideButton disabled><CopyIcon />复制</SideButton>
                        <SideButton disabled><BrushIcon />格式刷</SideButton>
                    </SideList>
                </RibbonGroup>
                <FontGroup />
                <ParagraphGroup />
                <StylesGroup />
                <RibbonGroup label="编辑" width={86}>
                    <SideList $tight>
                        <SideButton $tight><FindIcon />查找<Tool as="span" $w={18}><Caret /></Tool></SideButton>
                        <SideButton $tight><ReplaceIcon />替换</SideButton>
                        <SideButton $tight><CursorIcon />选择<Caret /></SideButton>
                    </SideList>
                </RibbonGroup>
                <RibbonGroup label="Adobe Acrobat" width={146}>
                    <BigButtons $indent={8}>
                        <BigButton><PdfIcon /><span>创建并共享</span><span>Adobe PDF</span></BigButton>
                        <BigButton><SignIcon /><span>请求</span><span>签名</span></BigButton>
                    </BigButtons>
                </RibbonGroup>
                <RibbonGroup label="保存" width={74}>
                    <BigButtons $indent={6}>
                        <BigButton><NetdiskIcon /><span>保存到</span><span>百度网盘</span></BigButton>
                    </BigButtons>
                </RibbonGroup>
                <CollapseCell>
                    <svg width="11" height="7" fill="none" stroke="#666" strokeWidth="2"><path d="M1 6l4.500-4.500L10 6" /></svg>
                </CollapseCell>
            </Ribbon>
            <Document />
            <StatusBar>
                <StatusInfo>
                    <span>第 1 页，共 3 页</span>
                    <span>1317 个字</span>
                    <ProofIcon />
                    <span>中文(中国)</span>
                    <span>插入</span>
                    <MacroIcon />
                </StatusInfo>
                <ViewTools>
                    <ViewButton aria-label="阅读视图"><ReadIcon /></ViewButton>
                    <ViewButton aria-label="页面视图" $active><PrintIcon /></ViewButton>
                    <ViewButton aria-label="Web 版式视图"><WebIcon /></ViewButton>
                    <ZoomStep aria-label="缩小"><svg width="9" height="2"><path d="M0 0h9v2H0z" fill="#fff" /></svg></ZoomStep>
                    <ZoomSlider type="range" aria-label="缩放" defaultValue="50" />
                    <ZoomStep aria-label="放大"><svg width="11" height="11" stroke="#fff" strokeWidth="2"><path d="M5.500 0v11M0 5.500h11" /></svg></ZoomStep>
                    <ZoomValue>100%</ZoomValue>
                </ViewTools>
            </StatusBar>
            <TaskStrip>
                <TaskSearch><svg width="4" height="7"><path d="M2 0l2 7H0z" fill="#999" /></svg></TaskSearch>
                <Clock>20:18</Clock>
            </TaskStrip>

            <FindReplaceDialog />
            <MessageDialog />

            <Mark $x={108} $y={240} $w={94} $h={46} />
            <Mark $x={49} $y={289} $w={230} $h={36} />
            <Mark $x={41} $y={373} $w={243} $h={56} />
            <StepNumber $x={303} $y={295}>①</StepNumber>
            <StepNumber $x={301} $y={392}>②</StepNumber>
            <Arrows width="960" height="600" fill="#f83a3a">
                <path d="M282 440l104 27 2-3 14 13-18 3 1-5L282 442z" />
                <path d="M437 528l494 46 1-4 16 9-17 8v-5L437 530z" />
            </Arrows>
            <Watermark>头条 @系统正在升级inglk</Watermark>
        </Window>
    );
};

export default App;
